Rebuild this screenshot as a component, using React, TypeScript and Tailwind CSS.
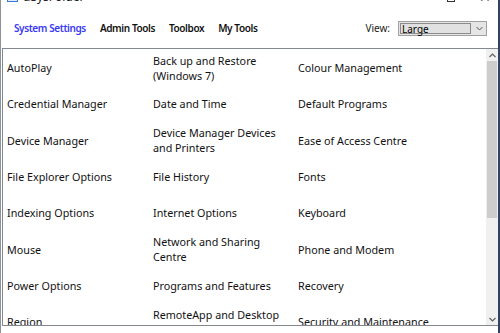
import React from "react";

const rows: (string[] | string)[][] = [
  ["AutoPlay", ["Back up and Restore", "(Windows 7)"], "Colour Management"],
  ["Credential Manager", "Date and Time", "Default Programs"],
  ["Device Manager", ["Device Manager Devices", "and Printers"], "Ease of Access Centre"],
  ["File Explorer Options", "File History", "Fonts"],
  ["Indexing Options", "Internet Options", "Keyboard"],
  ["Mouse", ["Network and Sharing", "Centre"], "Phone and Modem"],
  ["Power Options", "Programs and Features", "Recovery"],
  ["Region", ["RemoteApp and Desktop", "Connections"], "Security and Maintenance"],
];

function Cell({ v }: { v: string[] | string }) {
  const lines = Array.isArray(v) ? v : [v];
  return (
    <div className="h-[36.33px] flex flex-col justify-center">
      {lines.map((l) => (
        <div key={l} className="leading-[15px] whitespace-nowrap">{l}</div>
      ))}
    </div>
  );
}

export default function App() {
  return (
    <div
      className="w-[500px] h-[333px] bg-white relative overflow-hidden border-l border-l-[#8e9399] border-r-2 border-r-[#2f4463] text-black"
      style={{ fontFamily: '"Noto Sans", "Open Sans", sans-serif' }}
    >
      {/* title strip (cut off) */}
      <div className="h-[4px] overflow-hidden relative">
        <div className="absolute left-[6px] top-[-9px] w-[11px] h-[11px] border border-[#3a78d8] bg-[#dfe9f8]" />
        <div className="absolute left-[22px] top-[-12px] text-[12px] text-[#222]">uSysFolder</div>
        <div className="absolute left-[446px] top-[-6px] w-[8px] h-[8px] border border-[#333]" />
        <div className="absolute left-[478px] top-[-10px] text-[14px] leading-[14px] text-[#333]">✕</div>
      </div>
      {/* toolbar */}
      <div className="h-[44px] pt-[5px] flex items-center pl-[13px] pr-[11px] text-[10px] font-semibold tracking-[-0.4px]">
        <div className="text-[#3838f5]">System Settings</div>
        <div className="ml-[14px] text-[#111]">Admin Tools</div>
        <div className="ml-[14px] text-[#111]">Toolbox</div>
        <div className="ml-[14px] text-[#111]">My Tools</div>
        <div className="flex-1" />
        <div className="font-normal tracking-normal text-[10px] text-[#222] mr-[8px]">View:</div>
        <div className="flex w-[89px] h-[15px] border border-[#a0a0a0] bg-[#e5e5e5] tracking-normal">
          <div className="flex-1 m-[1px] border border-[#8c8c8c] bg-[#e1e1e1] flex items-center pl-[1px] text-[10px] font-normal leading-none">
            Large
          </div>
          <div className="w-[14px] flex items-center justify-center">
            <svg width="7" height="5" viewBox="0 0 7 5">
              <path d="M0.5 1 L3.5 4 L6.5 1" fill="none" stroke="#555" strokeWidth="1" />
            </svg>
          </div>
        </div>
      </div>
      {/* panel */}
      <div className="ml-[1px] h-[278px] border-t border-b border-l border-[#828790] flex">
        <div className="flex-1 overflow-hidden pl-[4px] pt-[1.5px] text-[10.75px] text-[#111]">
          <div className="grid grid-cols-[146px_145px_1fr]">
            {rows.map((r, i) => (
              <React.Fragment key={i}>
                {r.map((c, j) => (
                  <Cell key={j} v={c} />
                ))}
              </React.Fragment>
            ))}
          </div>
        </div>
        <div className="w-[12px] bg-[#f0f0f0] flex flex-col">
          <div className="h-[12px] flex items-center justify-center">
            <svg width="7" height="5" viewBox="0 0 7 5">
              <path d="M0.5 4 L3.5 1 L6.5 4" fill="none" stroke="#606060" strokeWidth="1.2" />
            </svg>
          </div>
          <div className="mx-[1px] h-[157px] bg-[#cdcdcd]" />
          <div className="flex-1" />
          <div className="h-[12px] flex items-center justify-center">
            <svg width="7" height="5" viewBox="0 0 7 5">
              <path d="M0.5 1 L3.5 4 L6.5 1" fill="none" stroke="#606060" strokeWidth="1.2" />
            </svg>
          </div>
        </div>
      </div>
    </div>
  );
}
